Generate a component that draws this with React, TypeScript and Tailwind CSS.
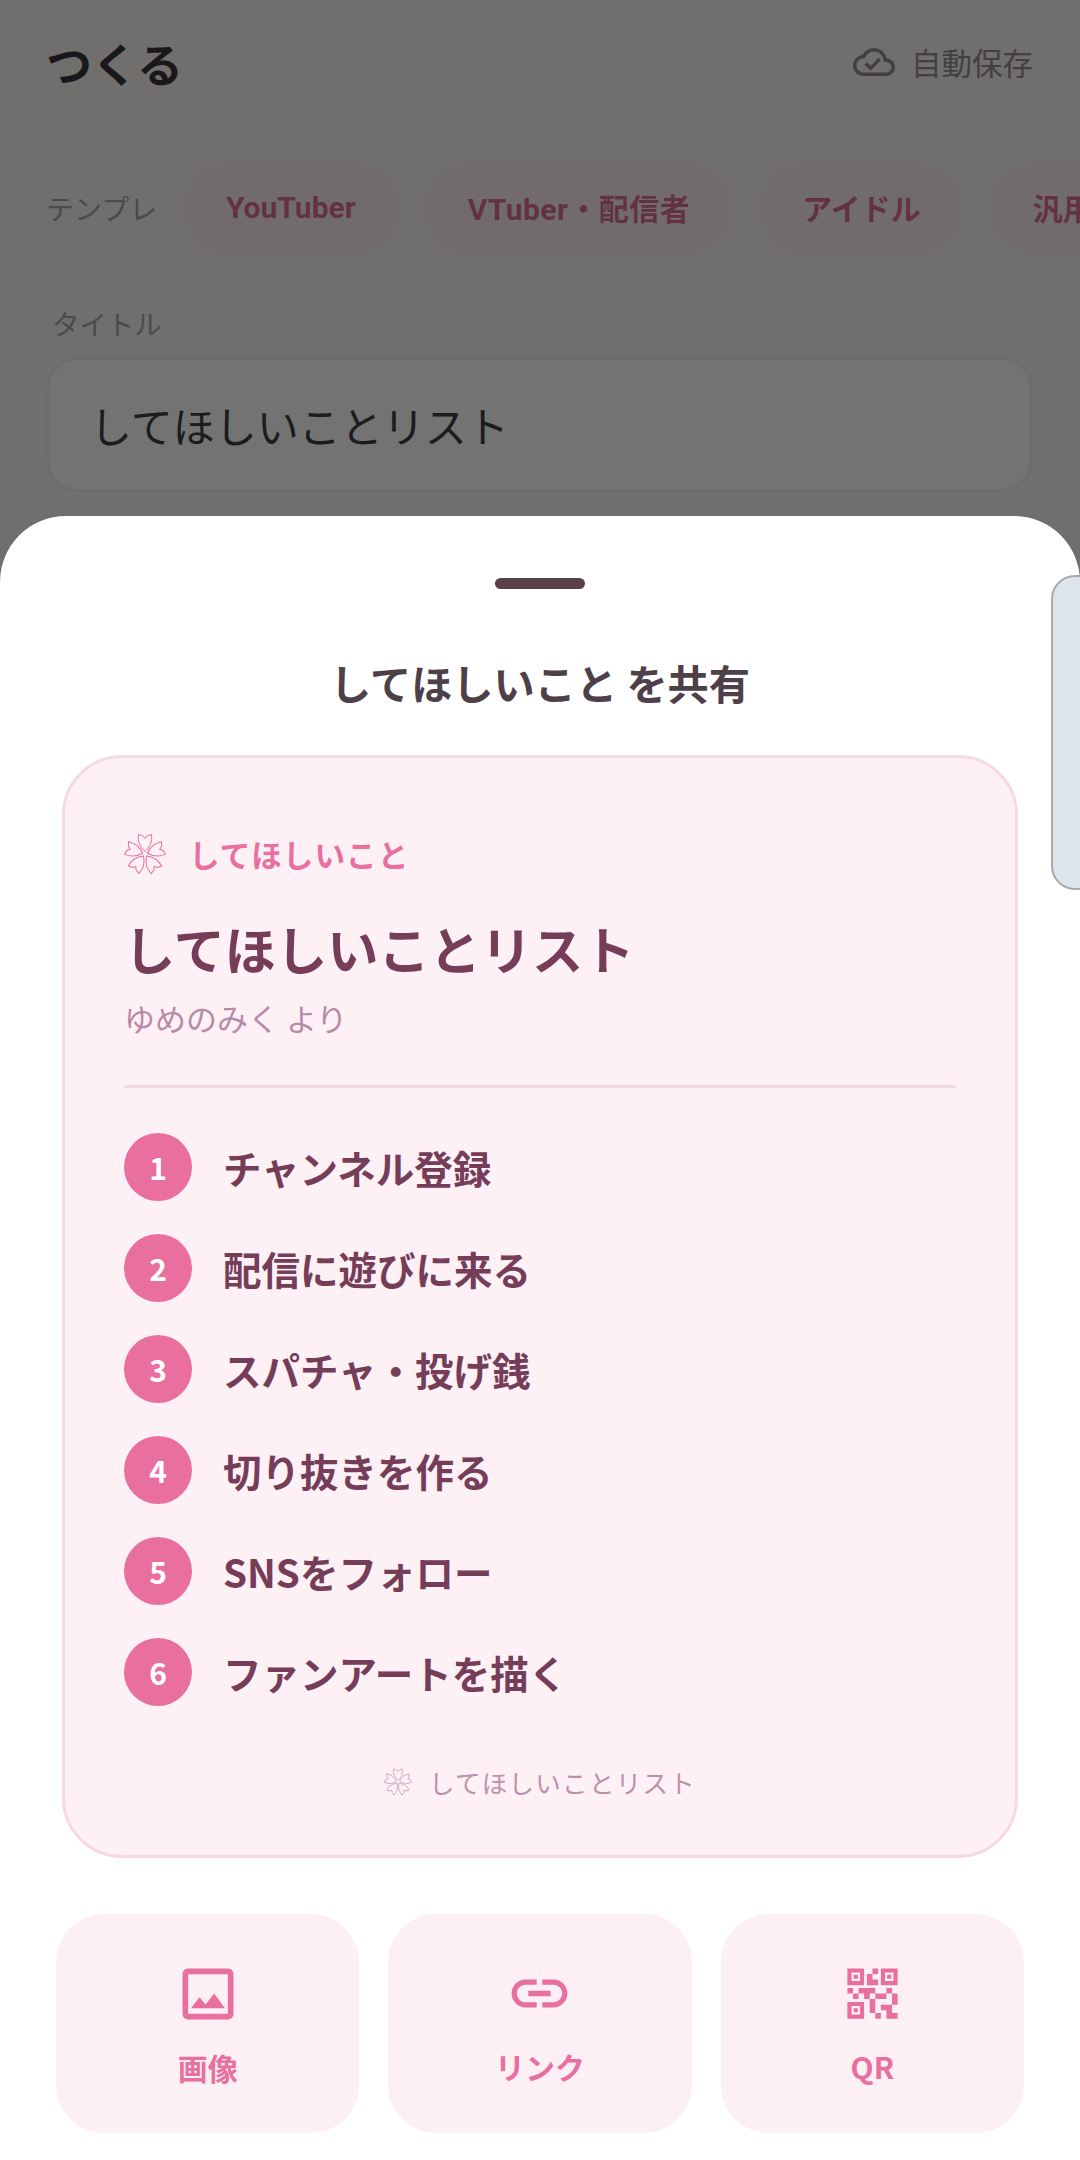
import React from "react";
import { MdLink, MdOutlineCloudDone, MdOutlineImage, MdQrCode2 } from "react-icons/md";

const font = { fontFamily: '"Noto Sans CJK JP", "Noto Sans", sans-serif' };

const items = [
  "チャンネル登録",
  "配信に遊びに来る",
  "スパチャ・投げ銭",
  "切り抜きを作る",
  "SNSをフォロー",
  "ファンアートを描く",
];

function Flower({ className }: { className: string }) {
  return (
    <svg viewBox="-21 -21 42 42" className={className} fill="none" stroke="currentColor" strokeWidth="1">
      {[0, 72, 144, 216, 288].map((deg) => (
        <path
          key={deg}
          transform={`rotate(${deg})`}
          d="M0 -2.5C-5 -7 -7.5 -12 -6.5 -19.5L-2.2 -18.2L0 -15.5L2.2 -18.2L6.5 -19.5C7.5 -12 5 -7 0 -2.5Z"
        />
      ))}
    </svg>
  );
}

function Chip({ label, className }: { label: string; className?: string }) {
  return (
    <div className="flex h-[89px] shrink-0 items-center rounded-[40px] bg-[#fbeef3] px-[41px] font-['Roboto','Noto_Sans_CJK_JP',sans-serif] text-[30px] font-bold text-[#c2185b]/60">
      <span className={className}>{label}</span>
    </div>
  );
}

function ActionButton({ icon, label }: { icon: React.ReactNode; label: string }) {
  return (
    <button className="flex h-[219px] flex-1 flex-col items-center rounded-[48px] bg-[#fdf0f5] pt-[46px] text-[#e96f9e]">
      {icon}
      <span className="mt-[17px] text-[30px] font-bold leading-[44px]">{label}</span>
    </button>
  );
}

export default function App() {
  return (
    <div className="relative h-[2160px] w-[1080px] overflow-hidden bg-[#f8f6f3]" style={font}>
      {/* page behind the sheet */}
      <div className="px-[46px] pt-[30px]">
        <div className="flex items-center justify-between pr-[1px]">
          <h1 className="text-[46px] font-bold leading-[64px] text-[#3a353a]">つくる</h1>
          <div className="flex items-center gap-[16px] text-[#968d8f]">
            <MdOutlineCloudDone size={42} />
            <span className="text-[30.5px] leading-[44px]">自動保存</span>
          </div>
        </div>
        <div className="mt-[70px] flex items-center gap-[30px] whitespace-nowrap">
          <span className="w-[109px] shrink-0 -translate-y-[1px] overflow-hidden text-[28px] text-[#aaa4a4]">テンプレ</span>
          <Chip label="YouTuber" className="-translate-y-[1px]" />
          <Chip label="VTuber・配信者" className="translate-y-[1px] tracking-[0.45px]" />
          <Chip label="アイドル" className="translate-y-[1px]" />
          <Chip label="汎用" className="translate-y-[1px]" />
        </div>
        <div className="mt-[50px] px-[6px] text-[27.5px] leading-[40px] text-[#aaa4a4]">タイトル</div>
        <div className="mt-[14px] flex h-[135px] w-[987px] items-center rounded-[32px] border-[3px] border-[#f3eeee] bg-white px-[41px] text-[42px] text-[#403d40]">
          してほしいことリスト
        </div>
      </div>

      {/* scrim */}
      <div className="absolute inset-0 bg-black/55" />

      {/* bottom sheet */}
      <div className="absolute inset-x-0 bottom-0 top-[516px] rounded-t-[66px] bg-white pt-[62px]">
        <div className="mx-auto h-[11px] w-[90px] rounded-full bg-[#5a4049]" />
        <h2 className="mt-[65px] text-center text-[41.2px] font-bold leading-[56px] text-[#4d4049]">
          してほしいこと を共有
        </h2>

        <div className="mx-[62px] mt-[45px] h-[1103px] rounded-[60px] border-[3px] border-[#f5d9e5] bg-[#fef1f6] px-[59px] pt-[75px]">
          <div className="flex items-center gap-[23px] text-[#e96f9e]">
            <Flower className="size-[42px]" />
            <span className="text-[30.6px] font-bold leading-[41px] tracking-[1px]">してほしいこと</span>
          </div>
          <div className="mt-[38px] text-[51.2px] font-bold leading-[70px] text-[#763d59]">
            してほしいことリスト
          </div>
          <div className="mt-[15px] text-[31px] leading-[40px] text-[#b98aa5]">ゆめのみく より</div>
          <div className="mt-[47px] h-[3px] bg-[#f4d8e4]" />
          <ul className="mt-[45px] flex flex-col gap-[33px]">
            {items.map((item, i) => (
              <li key={item} className="flex items-center gap-[31px]">
                <span className="flex size-[68px] items-center justify-center rounded-full bg-[#e96f9e] text-[30px] font-bold text-white">
                  {i + 1}
                </span>
                <span className="text-[38.5px] font-bold leading-[56px] text-[#763d59]">{item}</span>
              </li>
            ))}
          </ul>
          <div className="mt-[58px] flex items-center justify-center gap-[17px] text-[#c08fab]">
            <Flower className="size-[28px]" />
            <span className="text-[25.5px] leading-[36px] tracking-[1.3px]">してほしいことリスト</span>
          </div>
        </div>

        <div className="mx-[56px] mt-[56px] flex gap-[29px]">
          <ActionButton icon={<MdOutlineImage size={68} />} label="画像" />
          <ActionButton icon={<MdLink size={67} />} label="リンク" />
          <ActionButton icon={<MdQrCode2 size={67} />} label="QR" />
        </div>
      </div>

      {/* next card peeking in */}
      <div className="absolute left-[1051px] top-[575px] h-[315px] w-[120px] rounded-[24px] border-[2px] border-[#aaaaaa] bg-[#dde5ec]" />
    </div>
  );
}
